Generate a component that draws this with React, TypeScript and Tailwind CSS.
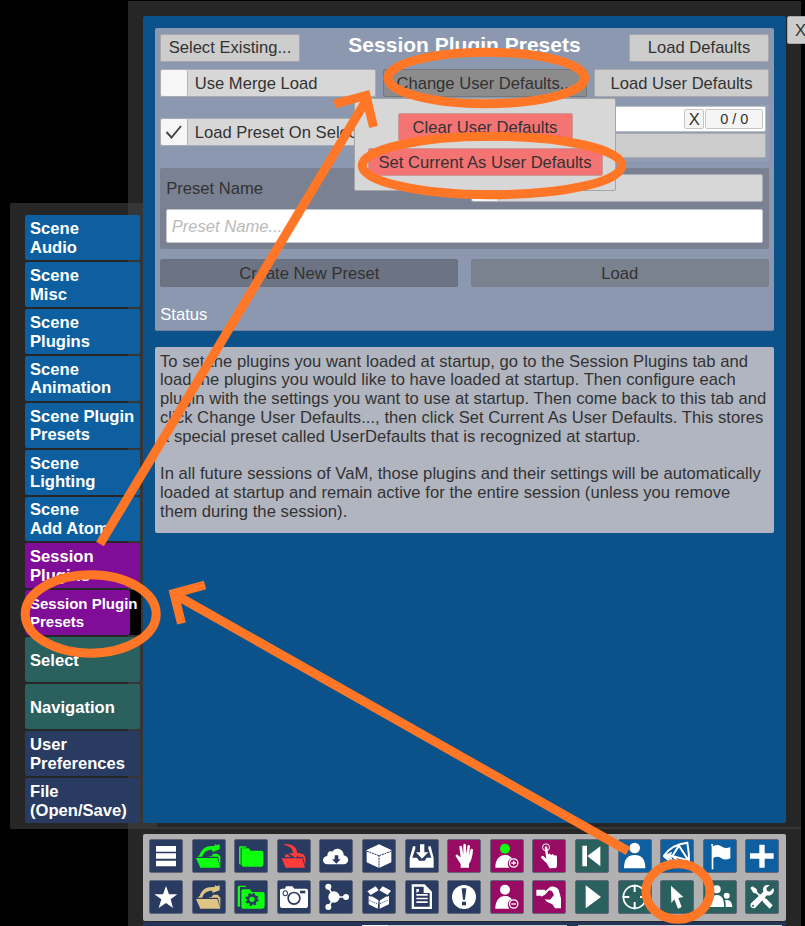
import React from "react";

const NAVY = "bg-[#293b60]";
const MAGENTA = "bg-[#970b63]";
const TEAL = "bg-[#2a605d]";
const BLUE = "bg-[#0d5fa0]";
const PURPLE = "bg-[#800d97]";

type Tab = { lines: string[]; color: string; active?: boolean };

const tabs: Tab[] = [
  { lines: ["Scene", "Audio"], color: BLUE },
  { lines: ["Scene", "Misc"], color: BLUE },
  { lines: ["Scene", "Plugins"], color: BLUE },
  { lines: ["Scene", "Animation"], color: BLUE },
  { lines: ["Scene Plugin", "Presets"], color: BLUE },
  { lines: ["Scene", "Lighting"], color: BLUE },
  { lines: ["Scene", "Add Atom"], color: BLUE },
  { lines: ["Session", "Plugins"], color: PURPLE },
  { lines: ["Session Plugin", "Presets"], color: PURPLE, active: true },
  { lines: ["Select"], color: TEAL },
  { lines: ["Navigation"], color: TEAL },
  { lines: ["User", "Preferences"], color: NAVY },
  { lines: ["File", "(Open/Save)"], color: NAVY },
];

function OpenFolder() {
  return (
    <>
      <path d="M12 57h64l9 29H25z" />
      <path d="M50 53q4-3 8-1l6-8h13l8 9v31l-7-31z" />
      <path d="M31 53c3-14 14-21 30-21v7l22-8V16l-9 3-3-4-4 6c-24-2-38 8-44 27l-7 5z" />
    </>
  );
}

function Person({ head }: { head?: string }) {
  return (
    <>
      <circle cx="45" cy="29" r="15" fill={head} />
      <path d="M16 86C16 62 28 48 45 48c10 0 17 4 21 10-12 2-17 17-8 28z" />
      <circle cx="71" cy="72" r="12.500" fill="#970b63" stroke="white" strokeWidth="4" />
      <path d="M64 72h14" stroke="white" strokeWidth="4" />
    </>
  );
}

const icons: { color: string; fill?: string; art: React.ReactNode }[] = [
  { color: NAVY, art: <path d="M21 21h60v17H21zM21 43h60v16H21zM21 65h60v17H21z" /> },
  { color: NAVY, fill: "#0dff0d", art: <OpenFolder /> },
  {
    color: NAVY,
    fill: "#0dff0d",
    art: (
      <>
        <path d="M23 33q0-5 5-5h16l6 7h32q6 0 6 6v36q0 6-6 6H29q-6 0-6-6z" />
        <path d="M15 74V26q0-4 4-4h18v4H20v52zM21 27l5-3v6z" />
      </>
    ),
  },
  {
    color: NAVY,
    fill: "#ff3b3b",
    art: (
      <>
        <path d="M14 58h62l8 28H26z" />
        <path d="M62 54l5-9h12l6 9v27l-7-27z" />
        <path d="M22 15c25-1 38 10 38 27h12L55 57 35 43h13c0-13-8-21-26-25z" />
        <path d="M24 48l8-3 8 9H24z" />
      </>
    ),
  },
  {
    color: NAVY,
    art: (
      <>
        <path d="M26 76C8 76 7 53 25 51c0-15 10-16 15-13 8-15 34-11 34 11 19 3 17 27 0 27z" />
        <path d="M47 49h11v12h7L52 74 39 61h8z" fill="#293b60" />
      </>
    ),
  },
  {
    color: NAVY,
    art: (
      <>
        <path d="M51 16l37 17v37L51 87 14 70V33z" />
        <path d="M15 37l36 13 36-13M51 49v37" fill="none" stroke="#293b60" strokeWidth="3" strokeDasharray="6 2" />
      </>
    ),
  },
  {
    color: NAVY,
    art: (
      <>
        <path d="M31 22h-7L14 57v29h72V57L77 22h-7v7l9 27H65l-6 9H42l-6-9H22l9-27z" />
        <path d="M45 16h13v24h12L51 59 33 40h12z" />
      </>
    ),
  },
  {
    color: MAGENTA,
    art: (
      <path d="M41 86V75L26 52q-1-6 5-5l10 8-4-32q4-6 8 0l4 24V17q4-5 8 0v29l5-27q4-3 7 2l-3 28 5-19q5-3 7 2-1 26-12 43v11z" />
    ),
  },
  {
    color: MAGENTA,
    art: (
      <>
        <Person head="#0dff0d" />
        <path d="M71 65v14" stroke="white" strokeWidth="4" />
      </>
    ),
  },
  {
    color: MAGENTA,
    art: (
      <>
        <circle cx="42" cy="25" r="10.500" fill="none" stroke="white" strokeWidth="3" />
        <path d="M38 25q4-7 8 0l2 22 3-4 7 5 4-3 6 5 4-2 3 5v26l-2 8-20 1-9-15-17-17q1-7 7-5l9 8z" />
      </>
    ),
  },
  { color: TEAL, art: <path d="M22 20h14v62H22zM76 22v60L37 51z" /> },
  {
    color: BLUE,
    art: (
      <>
        <circle cx="50" cy="27" r="16" />
        <path d="M18 88C18 60 29 48 50 48s32 12 32 40z" />
      </>
    ),
  },
  {
    color: BLUE,
    art: (
      <>
        <path
          d="M11 51C28 26 52 14 82 11c4 22 6 44 5 66M11 51h26l46 13M11 51c22 22 45 28 76 26M37 51l20-31M57 20l27 42M37 51l26 24"
          fill="none"
          stroke="white"
          strokeWidth="6"
        />
        <path d="M8 51l28-13-3 13 5 13z" />
      </>
    ),
  },
  {
    color: BLUE,
    art: <path d="M24 17q4-5 6 0v5q14-9 27 1 12 7 25 1v34q-16 8-28-1-11-7-23 0v34h-5V22z" />,
  },
  { color: BLUE, art: <path d="M43 17h16v26h27v16H59v27H43V59H15V43h28z" /> },
  { color: NAVY, art: <path d="M51 18l9 25h25L65 58l7 26-21-15-22 15 8-26-21-15h26z" /> },
  { color: NAVY, fill: "#dfc585", art: <OpenFolder /> },
  {
    color: NAVY,
    fill: "#0dff0d",
    art: (
      <>
        <path d="M22 34q0-6 6-6h20l5 8h32q7 0 7 6v37q0 7-7 7H28q-6 0-6-6z" />
        <path d="M11 80V22q0-5 5-5h19v4H18v59z" />
        <g fill="none" stroke="#293b60">
          <circle cx="54" cy="58" r="12" strokeWidth="8" />
          <circle cx="54" cy="58" r="17" strokeWidth="6" strokeDasharray="6.700 6.650" />
        </g>
      </>
    ),
  },
  {
    color: NAVY,
    art: (
      <>
        <path d="M9 31q0-5 5-5h10l3-7h19l6 7h35q6 0 6 6v46q0 6-6 6H15q-6 0-6-6z" />
        <g fill="#293b60">
          <circle cx="51" cy="55" r="20" />
          <circle cx="51" cy="55" r="15" fill="white" />
          <ellipse cx="25" cy="40" rx="8" ry="9" />
          <ellipse cx="25" cy="40" rx="5" ry="6" fill="white" />
          <path d="M69 32h16v8H69z" />
        </g>
      </>
    ),
  },
  {
    color: NAVY,
    art: (
      <>
        <path d="M28 22l17 29-17 31M45 51h38" fill="none" stroke="white" strokeWidth="5" />
        <circle cx="45" cy="51" r="17" />
        <circle cx="28" cy="20" r="9" />
        <circle cx="81" cy="51" r="9" />
        <circle cx="28" cy="81" r="9" />
      </>
    ),
  },
  {
    color: NAVY,
    art: (
      <>
        <path d="M16 34l25-15 9 12-24 14zM52 31l10-12 25 13-10 13zM20 47l7 3 23-14v23l-3 27-27-13zM81 47l-5 3-23-14v50l28-13z" />
        <path d="M27 47l24-13 25 13-24 15z" fill="#293b60" />
        <path d="M22 61l28 12 30-13" fill="none" stroke="#293b60" strokeWidth="2.500" strokeDasharray="4 3" />
      </>
    ),
  },
  {
    color: NAVY,
    art: (
      <>
        <path d="M20 13h39l22 22v52H20z" />
        <path d="M27 20h29v19h18v41H27z" fill="#293b60" />
        <path d="M60 20l15 15H60zM34 42h34v5H34zM34 53h34v5H34zM34 64h34v5H34zM34 27h8v8h-5v3h-3z" />
      </>
    ),
  },
  {
    color: NAVY,
    art: (
      <>
        <circle cx="51" cy="51" r="36" />
        <path d="M44 25h14l-4 34h-6zM45 65h12v11H45z" fill="#293b60" />
      </>
    ),
  },
  { color: MAGENTA, art: <Person /> },
  {
    color: MAGENTA,
    art: (
      <path d="M13 29h26v5l16-14q18-3 25 10l7 25v30H69l-8-12-17-8-6-7 16 1 12-14-6-12-9-2-12 13-12 6v-3H13z" />
    ),
  },
  { color: TEAL, art: <path d="M32 16l46 35-46 34z" /> },
  {
    color: TEAL,
    art: (
      <>
        <circle cx="50" cy="51" r="34" fill="none" stroke="white" strokeWidth="5" />
        <path d="M50 14v22M50 66v22M14 51h20M66 51h22" stroke="white" strokeWidth="6" />
      </>
    ),
  },
  { color: TEAL, art: <path d="M33 17l37 34-15 3 10 27-11 5-11-28-9 11z" /> },
  {
    color: TEAL,
    art: (
      <>
        <circle cx="41" cy="28" r="12" />
        <path d="M18 81c0-24 9-36 24-36 14 0 22 12 21 36z" />
        <circle cx="71" cy="47" r="9" />
        <path d="M68 81q1-12-2-20 20-6 22 20z" />
      </>
    ),
  },
  {
    color: TEAL,
    art: (
      <>
        <path d="M16 24l6-5 13 8 2 9 15 15 12 5 19 20-9 10-20-20-4-11-16-14-9-3z" />
        <path d="M85 24L74 35l-8-3-2-8 10-8C60 11 51 22 55 35L18 70c-6 10 4 18 13 13l35-37c13 4 25-9 19-22z" />
        <circle cx="24" cy="77" r="3" fill="#2a605d" />
      </>
    ),
  },
];

function Btn({
  className = "",
  tone = "border-[#a9a9ab] bg-[#cdcdcd]",
  children,
}: {
  className?: string;
  tone?: string;
  children?: React.ReactNode;
}) {
  return (
    <button
      className={`flex h-[28px] shrink-0 items-center justify-center rounded-[2px] border pt-[2px] whitespace-nowrap ${tone} ${className}`}
    >
      {children}
    </button>
  );
}

function Check({ label, checked, className = "" }: { label: string; checked?: boolean; className?: string }) {
  return (
    <label
      className={`flex h-[28px] items-center overflow-hidden rounded-[2px] border border-[#a9acb2] bg-[#d7d7d7] ${className}`}
    >
      <span className="flex h-full w-[27px] shrink-0 items-center justify-center rounded-[2px] border-r border-[#b5b5b5] bg-[#f6f6f6]">
        {checked && (
          <svg viewBox="0 0 18 16" className="h-[16px] w-[18px]" fill="none" stroke="#444" strokeWidth="1.900">
            <path d="M1.500 8l5 5.500L16 2" />
          </svg>
        )}
      </span>
      <span className="pt-[2px] pl-[6.500px] whitespace-nowrap">{label}</span>
    </label>
  );
}

export default function App() {
  return (
    <div className="relative flex h-[926px] w-[805px] overflow-hidden bg-black font-['Liberation_Sans',Arial,sans-serif] text-[16.600px] leading-[18.750px] text-[#323232]">
      <aside className="relative mt-[203px] -mr-[29px] ml-[10px] h-[626px] w-[147px] shrink-0 bg-[linear-gradient(to_right,#262626_118px,#363636_118px)] pt-[12px] pl-[15px]">
        <nav className="grid h-[608px] w-[115px] grid-rows-13 gap-[2px]">
          {tabs.map((t) => (
            <div key={t.lines.join(" ")} className={`min-h-0 ${t.active ? "-mr-px bg-black" : ""}`}>
              <div
                className={`flex h-full flex-col justify-center rounded-[2px] pl-[5px] font-bold whitespace-nowrap text-white ${t.color} ${
                  t.active ? "w-[105px] text-[15px] leading-[17.500px]" : "w-full pt-[2.500px]"
                }`}
              >
                {t.lines.map((l) => (
                  <span key={l}>{l}</span>
                ))}
              </div>
            </div>
          ))}
        </nav>
      </aside>

      <main className="mt-px h-[925px] w-[673px] shrink-0 bg-[#262626] pt-[15px] pl-[15px]">
        <section className="relative z-10 h-[806.500px] w-[642.500px] rounded-[2px] bg-[#0b528a] pt-[12px] pl-[12px]">
          <div className="h-[303px] w-[619px] rounded-[2px] border-b border-[#75829c] bg-[#8c98af] px-[5.250px] pt-[5.500px]">
            <div className="flex items-center justify-between">
              <Btn className="w-[139.500px]">Select Existing...</Btn>
              <h1 className="pb-[4px] text-[21px] font-bold text-white">Session Plugin Presets</h1>
              <Btn className="w-[139.500px]">Load Defaults</Btn>
            </div>

            <div className="mt-[7.500px] flex justify-between">
              <Check label="Use Merge Load" className="w-[215.500px]" />
              <div className="relative">
                <Btn className="w-[204px]" tone="border-[#777] bg-[#8c8c8c]">
                  Change User Defaults...
                </Btn>
                <div className="absolute top-[29px] left-[-29px] z-20 flex h-[93px] w-[262px] flex-col items-center rounded-[2px] border border-[#a5a5a5] bg-[#d7d7d7] pt-[14px]">
                  <Btn className="w-[175px]" tone="border-[#c99a9a] bg-[#f47474]">
                    Clear User Defaults
                  </Btn>
                  <Btn className="mt-[7px] w-[235px]" tone="border-[#c99a9a] bg-[#f47474]">
                    Set Current As User Defaults
                  </Btn>
                </div>
              </div>
              <Btn className="w-[174.500px]">Load User Defaults</Btn>
            </div>

            <div className="mt-[8px] flex justify-between">
              <Check label="Load Preset On Select" checked className="mt-[13px] w-[215px]" />
              <div className="h-[56px] w-[380px] rounded-[2px] bg-[#939eb4] pt-[1px] pr-[2.500px]">
                <div className="flex h-[26px] items-center justify-end gap-[1px] rounded-[2px] border border-[#b9bdc6] bg-white pr-[2px]">
                  <span className="flex h-[20px] w-[20px] items-center justify-center rounded-[2px] border border-[#c6c6c6] bg-[#f5f5f5] pt-[2px]">X</span>
                  <span className="flex h-[20px] w-[58px] items-center justify-center rounded-[2px] border border-[#c6c6c6] bg-[#f5f5f5] pt-px text-[14.500px]">
                    0 / 0
                  </span>
                </div>
                <div className="mt-[1px] h-[25px] rounded-[2px] border border-[#a9abb0] bg-[#cdcdcd]" />
              </div>
            </div>

            <div className="mt-[7px] h-[81px] rounded-[2px] bg-[#7a8193] px-[6px] pt-[6px]">
              <div className="flex items-center justify-between">
                <span className="pt-[2px]">Preset Name</span>
                <Check label="" className="w-[291.500px]" />
              </div>
              <div className="mt-[7px] flex h-[34px] items-center rounded-[2px] border border-[#c4c7ce] bg-white pt-[2px] pl-[4.500px] text-[#bababa] italic">
                Preset Name...
              </div>
            </div>

            <div className="mt-[10px] flex justify-between">
              <Btn className="w-[298px]" tone="border-[#6a7180] bg-[#6c7383]">
                Create New Preset
              </Btn>
              <Btn className="w-[298px]" tone="border-[#78808f] bg-[#7a818f]">
                Load
              </Btn>
            </div>
            <div className="mt-[19px] text-white">Status</div>
          </div>

          <div className="mt-[16px] h-[186px] w-[619px] rounded-[2px] bg-[#b1b5c0] pt-[5.500px] pl-[5px] tracking-[0.040px] whitespace-nowrap">
            <p>
              To set the plugins you want loaded at startup, go to the Session Plugins tab and
              <br />
              load the plugins you would like to have loaded at startup. Then configure each
              <br />
              plugin with the settings you want to use at startup. Then come back to this tab and
              <br />
              click Change User Defaults..., then click Set Current As User Defaults. This stores
              <br />a special preset called UserDefaults that is recognized at startup.
            </p>
            <p className="mt-[18.750px]">
              In all future sessions of VaM, those plugins and their settings will be automatically
              <br />
              loaded at startup and remain active for the entire session (unless you remove
              <br />
              them during the session).
            </p>
          </div>
        </section>

        <div className="mt-[4.500px] h-[2px] bg-[#363636]" />

        <section className="mt-[5px] h-[86.500px] w-[642.500px] rounded-[2px] bg-[#b1b1b1] px-[6px] pt-[5px]">
          <div className="grid grid-cols-[repeat(15,34px)] justify-between gap-y-[7px]">
            {icons.map((icon, i) => (
              <button key={i} className={`h-[34px] w-[34px] rounded-[2px] border border-[#5f667a] ${icon.color}`}>
                <svg viewBox="0 0 102 102" className="-m-px h-[34px] w-[34px] max-w-none" fill={icon.fill ?? "white"}>
                  {icon.art}
                </svg>
              </button>
            ))}
          </div>
        </section>

        <div className="mt-[1px] flex h-[10px] w-[642.500px] justify-end gap-[11px] bg-[#233458] pt-[3px] pr-[4px]">
          <div className="flex w-[205px] bg-[#cdcdcd]">
            <span className="w-[26px] bg-[#f6f6f6]" />
          </div>
          <div className="w-[204px] bg-[#cdcdcd]" />
        </div>
      </main>

      <button className="absolute top-[16px] left-[787px] z-20 flex h-[28px] w-[27px] items-center justify-center rounded-[2px] border border-[#a9a9ab] bg-[#cdcdcd] pt-[2px]">
        X
      </button>

      <svg viewBox="0 0 805 926" className="pointer-events-none absolute inset-0 z-30 h-[926px] w-[805px]" fill="none" stroke="#ff7627" strokeWidth="9">
        <ellipse cx="486.300" cy="78" rx="98.300" ry="25.800" />
        <ellipse cx="492" cy="165.500" rx="129.800" ry="29.300" />
        <ellipse cx="90.700" cy="614" rx="65.500" ry="39.200" />
        <ellipse cx="678" cy="891.500" rx="32" ry="27.700" />
        <path d="M100 544L367 99M334.500 104l31.500-8.500 7.500 31.500" />
        <path d="M628 851L174 594M205 585l-31 8.500 7.500 30" />
      </svg>
    </div>
  );
}
